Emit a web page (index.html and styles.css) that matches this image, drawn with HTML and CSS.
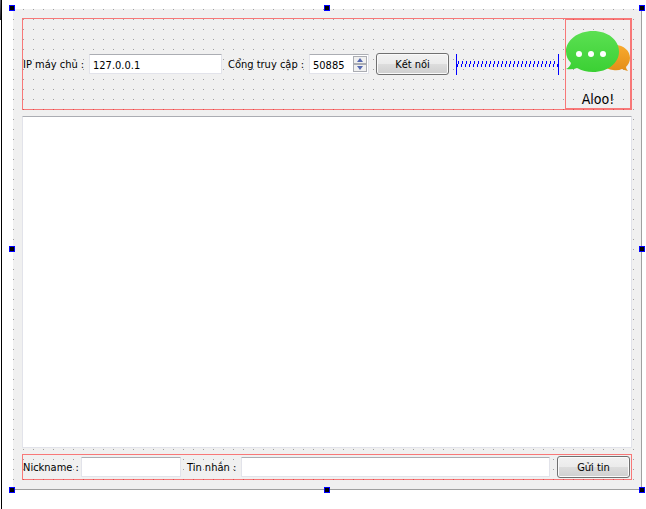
FILE: index.html
```html
<!DOCTYPE html>
<html lang="vi">
<head>
<meta charset="utf-8">
<title>Aloo!</title>
<link rel="stylesheet" href="styles.css">
</head>
<body>
<main class="canvas">
  <form class="form">
    <section class="group group-top">
      <label class="label-host" for="host">IP máy chủ :</label>
      <input class="field field-host" id="host" type="text" value="127.0.0.1">
      <label class="label-port" for="port">Cổng truy cập :</label>
      <div class="spin">
        <input class="field field-port" id="port" type="number" value="50885">
        <div class="steps">
          <button class="step" type="button" aria-label="+"><svg width="6" height="4" viewBox="0 0 6 4"><path d="M0 4 3 0 6 4Z"/></svg></button>
          <button class="step" type="button" aria-label="-"><svg width="6" height="4" viewBox="0 0 6 4"><path d="M0 0H6L3 4Z"/></svg></button>
        </div>
      </div>
      <button class="button" type="button">Kết nối</button>
      <svg class="spacer" aria-hidden="true">
        <defs>
          <pattern id="zigzag" width="4" height="6" x="0" y="7" patternUnits="userSpaceOnUse">
            <path d="M1 0H2V3H1ZM0 3H1V6H0Z" fill="#00f"/>
          </pattern>
        </defs>
        <rect y="7" width="100%" height="6" fill="url(#zigzag)" shape-rendering="crispEdges"/>
      </svg>
      <div class="logo">
        <svg class="logo-icon" width="64" height="64" viewBox="0 0 64 64" aria-hidden="true">
          <defs>
            <linearGradient id="green" x1="0" y1="0" x2="0" y2="1"><stop offset="0" stop-color="#5be052"/><stop offset="1" stop-color="#3bd034"/></linearGradient>
            <linearGradient id="orange" x1="0" y1="0" x2="0" y2="1"><stop offset="0" stop-color="#f8aa2e"/><stop offset="1" stop-color="#e48e18"/></linearGradient>
          </defs>
          <path d="M49 25C58 25 64 31 64 38C64 42 62 45 60 47Q60 49 62 51Q58 50 56 49Q52 51 47 50C39 49 34 44 34 38C34 31 41 25 49 25Z" fill="url(#orange)"/>
          <path d="M27 11C42 11 53 20 53 31.500C53 43 42 52 27 52Q18 52 11 48Q7 50 0 49Q4 47 5 43Q0 38 0 31.500C0 20 12 11 27 11Z" fill="url(#green)"/>
          <g fill="#fff"><circle cx="13" cy="34" r="3"/><circle cx="25" cy="34" r="3"/><circle cx="37" cy="34" r="3"/></g>
        </svg>
        <span class="logo-name">Aloo!</span>
      </div>
    </section>

    <textarea class="log" aria-label="Tin nhắn"></textarea>

    <section class="group group-bottom">
      <label class="label-nick" for="nick">Nickname :</label>
      <input class="field field-nick" id="nick" type="text">
      <label class="label-message" for="message">Tin nhắn :</label>
      <input class="field field-message" id="message" type="text">
      <button class="button" type="button">Gửi tin</button>
    </section>

    <i class="handle top left"></i><i class="handle top center"></i><i class="handle top right"></i>
    <i class="handle middle left"></i><i class="handle middle right"></i>
    <i class="handle bottom left"></i><i class="handle bottom center"></i><i class="handle bottom right"></i>
  </form>
</main>
</body>
</html>
```
FILE: styles.css
```css
* { box-sizing: border-box; }

body {
  margin: 0;
  background: #fff;
  color: #000;
  font: 11px/14px "DejaVu Sans Condensed", "Noto Sans", sans-serif;
}

body::before {
  content: "";
  position: absolute;
  left: 0;
  top: 0;
  width: 1px;
  height: 20px;
  background: linear-gradient(#667, #222);
}

.canvas {
  display: flex;
  min-height: 100vh;
  margin-left: 1px;
  padding: 9px 4px 19px 11px;
  border-left: 1px solid #000;
}

.form {
  position: relative;
  display: flex;
  flex: 1;
  flex-direction: column;
  gap: 6px;
  min-width: 0;
  padding: 9px;
  border: solid #a0a0a0;
  border-width: 0 1px 1px 0;
  background: conic-gradient(from 0deg at 1px 1px, transparent 75%, #a0a0a0 0) 0 0 / 10px 10px #f0f0f0;
}

.group {
  display: flex;
  align-items: center;
  gap: 6px;
  border: 1px solid rgba(255, 0, 0, 0.5);
}

.group-bottom { height: 26px; }

label {
  flex: none;
  padding-top: 2px;
  white-space: nowrap;
}

.label-host { width: 60px; }
.label-port { width: 75px; }
.label-nick { width: 52px; }
.label-message { width: 48px; }

.field,
.log {
  min-width: 0;
  margin: 0;
  border: 1px solid #e2e3ea;
  border-top-color: #abadb3;
  border-radius: 1px;
  outline: 0;
  background: #fff;
  color: #000;
  font: inherit;
}

.field {
  height: 20px;
  padding: 2px 3px 0;
}

.field-host { flex: 1 1 133px; }
.field-nick { flex: 1 1 100px; }
.field-message { flex: 3 1 309px; }

.spin {
  position: relative;
  flex: none;
  width: 60px;
}

.field-port {
  display: block;
  width: 100%;
  appearance: textfield;
}

.field-port::-webkit-inner-spin-button { appearance: none; margin: 0; }

.steps {
  position: absolute;
  top: 2px;
  right: 2px;
  display: grid;
  width: 14px;
  height: 16px;
}

.step {
  display: grid;
  place-items: center;
  padding: 0;
  border: 1px solid #abadb3;
  background: #f0f0f0;
  fill: #5468b0;
}

.button {
  flex: none;
  width: 73px;
  height: 22px;
  margin: 0 1px;
  padding: 1px 0 0;
  border: 1px solid #707070;
  border-radius: 3px;
  background: linear-gradient(#f2f2f2, #ebebeb 50%, #ddd 50%, #cfcfcf);
  box-shadow: inset 0 0 0 1px #fafafa;
  color: #000;
  font: inherit;
}

.spacer {
  flex: 1 1 103px;
  min-width: 0;
  height: 21px;
  border: solid #00f;
  border-width: 0 1px;
}

.logo {
  display: flex;
  flex: none;
  flex-direction: column;
  align-items: center;
  gap: 6px;
  width: 66px;
  height: 90px;
  border: 1px solid rgba(255, 0, 0, 0.5);
}

.logo-name {
  font-size: 14px;
  line-height: 18px;
}

.log {
  flex: 1;
  width: 100%;
  padding: 3px;
  resize: none;
}

.handle {
  position: absolute;
  width: 6px;
  height: 6px;
  border: 1px solid #00f;
  background: #000;
}

.top { top: -4px; }
.middle { top: calc(50% - 3px); }
.bottom { bottom: -4px; }
.left { left: -4px; }
.center { left: calc(50% - 3px); }
.right { right: -4px; }
```
